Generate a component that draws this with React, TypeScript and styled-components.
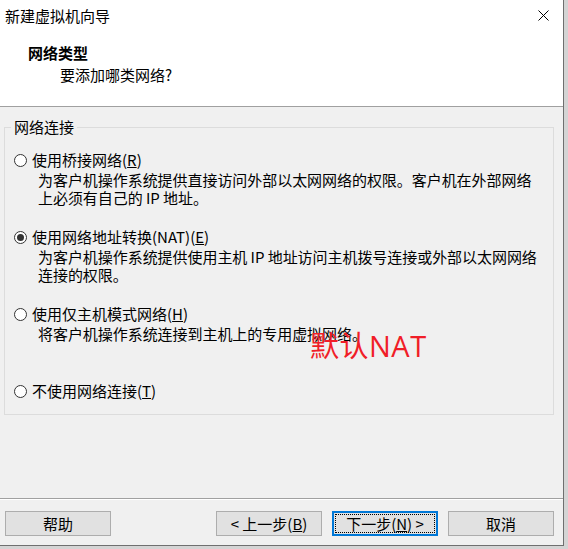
import React from "react";
import styled, { createGlobalStyle, css } from "styled-components";

const GlobalStyle = createGlobalStyle`
  html, body {
    margin: 0;
    padding: 0;
  }
  body {
    width: 568px;
    height: 549px;
    overflow: hidden;
    background: #d4d4d4;
    color: #000;
    font-family: "Noto Sans CJK SC", "Liberation Sans", sans-serif;
  }
`;

const Window = styled.div`
  position: relative;
  box-sizing: border-box;
  width: 564px;
  height: 546px;
  display: flex;
  flex-direction: column;
  background: #f0f0f0;
  border-right: 1px solid #6f6f6f;
  border-bottom: 1px solid #6f6f6f;
  font-size: 15px;
`;

const Header = styled.div`
  box-sizing: border-box;
  height: 107px;
  background: #fff;
  border-bottom: 1px solid #a0a0a0;
`;

const TitleBar = styled.div`
  height: 31px;
  display: flex;
  align-items: center;
  justify-content: space-between;
  padding: 0 14px 0 5px;
  line-height: 20px;
`;

const CloseIcon = () => (
  <svg width="11" height="11" viewBox="0 0 11 11">
    <path d="M0.5 0.5 L10.5 10.5 M10.5 0.5 L0.5 10.5" stroke="#000" strokeWidth="1" />
  </svg>
);

const PageTitle = styled.div`
  margin-top: 11px;
  padding-left: 28px;
  line-height: 22px;
  font-weight: bold;
`;

const PageSubtitle = styled.div`
  padding-left: 60px;
  line-height: 22px;
`;

const Body = styled.div`
  flex: 1;
  padding: 9px 0 0 4px;
`;

const GroupBox = styled.fieldset`
  box-sizing: border-box;
  width: 550px;
  height: 299px;
  min-width: 0;
  margin: 0;
  padding: 12px 0 0 0;
  border: 1px solid #dcdcdc;
`;

const GroupLabel = styled.legend`
  margin-left: 6px;
  padding: 0 3px;
  line-height: 22px;
`;

const Option = styled.div<{ last?: boolean }>`
  height: ${(p) => (p.last ? "auto" : "77px")};
`;

const OptionRow = styled.label`
  display: flex;
  align-items: center;
  height: 20px;
  padding-left: 9px;
  line-height: 20px;
`;

const Radio = styled.span<{ checked?: boolean }>`
  position: relative;
  box-sizing: border-box;
  width: 13px;
  height: 13px;
  margin-right: 5px;
  border: 1px solid #333;
  border-radius: 50%;
  background: #fff;
  ${(p) =>
    p.checked &&
    css`
      &::after {
        content: "";
        position: absolute;
        inset: 2px;
        border-radius: 50%;
        background: #333;
      }
    `}
`;

const Description = styled.div`
  margin: 1px 0 0 33px;
  line-height: 18px;
  letter-spacing: -0.05px;
`;

const Annotation = styled.div`
  position: absolute;
  left: 310px;
  top: 331px;
  font-family: "Open Sans", "Noto Sans CJK SC", sans-serif;
  font-size: 29px;
  line-height: 30px;
  color: #f01e28;
  letter-spacing: 0.5px;
`;

const Footer = styled.div`
  box-sizing: border-box;
  height: 47px;
  display: flex;
  align-items: flex-start;
  padding: 12px 9px 0 5px;
  border-top: 1px solid #a0a0a0;
  box-shadow: inset 0 1px 0 #fff;
`;

const Spacer = styled.div`
  flex: 1;
`;

const NavButtons = styled.div`
  display: flex;
  gap: 10px;
`;

const Button = styled.button<{ primary?: boolean }>`
  position: relative;
  box-sizing: border-box;
  width: 106px;
  height: 25px;
  padding: 0;
  background: #e1e1e1;
  border: 1px solid #adadad;
  color: #000;
  font-family: inherit;
  font-size: 15px;
  line-height: 21px;
  ${(p) =>
    p.primary &&
    css`
      border-color: #0078d7;
      box-shadow: inset 0 0 0 1px #0078d7;
      &::after {
        content: "";
        position: absolute;
        inset: 2px;
        border: 1px dotted #000;
      }
    `}
`;

const options = [
  {
    title: "使用桥接网络",
    key: "R",
    checked: false,
    lines: [
      "为客户机操作系统提供直接访问外部以太网网络的权限。客户机在外部网络",
      "上必须有自己的 IP 地址。",
    ],
  },
  {
    title: "使用网络地址转换(NAT)",
    key: "E",
    checked: true,
    lines: [
      "为客户机操作系统提供使用主机 IP 地址访问主机拨号连接或外部以太网网络",
      "连接的权限。",
    ],
  },
  {
    title: "使用仅主机模式网络",
    key: "H",
    checked: false,
    lines: ["将客户机操作系统连接到主机上的专用虚拟网络。"],
  },
  {
    title: "不使用网络连接",
    key: "T",
    checked: false,
    lines: [],
  },
];

const App = () => {
  return (
    <>
      <GlobalStyle />
      <Window>
        <Header>
          <TitleBar>
            <span>新建虚拟机向导</span>
            <CloseIcon />
          </TitleBar>
          <PageTitle>网络类型</PageTitle>
          <PageSubtitle>要添加哪类网络?</PageSubtitle>
        </Header>
        <Body>
          <GroupBox>
            <GroupLabel>网络连接</GroupLabel>
            {options.map((opt, index) => (
              <Option key={index} last={index === options.length - 1}>
                <OptionRow>
                  <Radio checked={opt.checked} />
                  <span>
                    {opt.title}(<u>{opt.key}</u>)
                  </span>
                </OptionRow>
                {opt.lines.length > 0 && (
                  <Description>
                    {opt.lines.map((line, i) => (
                      <div key={i}>{line}</div>
                    ))}
                  </Description>
                )}
              </Option>
            ))}
          </GroupBox>
        </Body>
        <Footer>
          <Button>帮助</Button>
          <Spacer />
          <NavButtons>
            <Button>
              &lt; 上一步(<u>B</u>)
            </Button>
            <Button primary>
              下一步(<u>N</u>) &gt;
            </Button>
            <Button>取消</Button>
          </NavButtons>
        </Footer>
        <Annotation>默认NAT</Annotation>
      </Window>
    </>
  );
};

export default App;
